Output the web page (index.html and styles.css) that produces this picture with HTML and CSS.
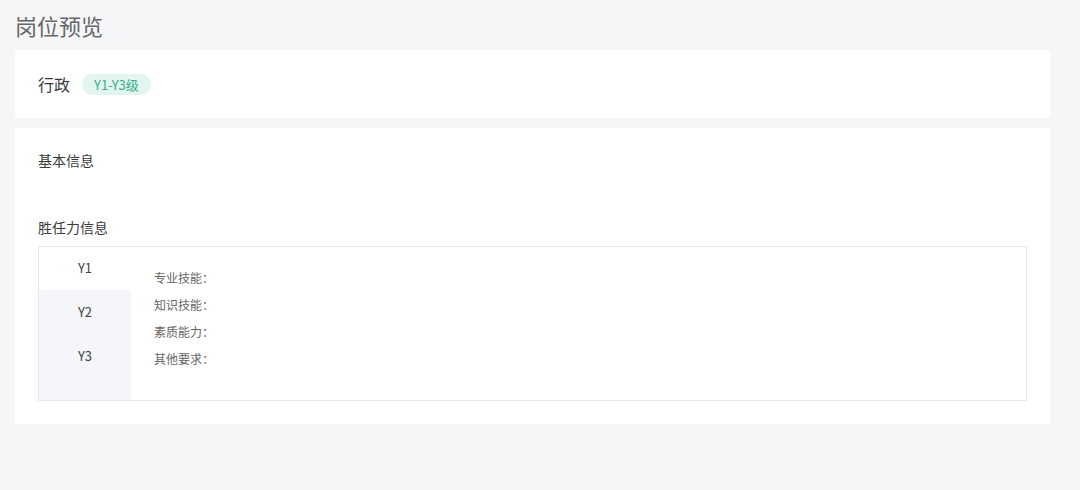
FILE: index.html
```html
<!DOCTYPE html>
<html lang="zh-CN">
<head>
  <meta charset="UTF-8">
  <meta name="viewport" content="width=device-width, initial-scale=1.0">
  <title>岗位预览</title>
  <link rel="stylesheet" href="styles.css">
</head>
<body>
  <div class="page">
    <h1 class="page-title">岗位预览</h1>

    <div class="card card-head">
      <span class="job-name">行政</span>
      <span class="tag">Y1-Y3级</span>
    </div>

    <div class="card card-body">
      <div class="section-title">基本信息</div>
      <div class="section-title section-gap">胜任力信息</div>

      <div class="level-box">
        <div class="level-tabs">
          <div class="level-tab active">Y1</div>
          <div class="level-tab">Y2</div>
          <div class="level-tab">Y3</div>
        </div>
        <div class="level-info">
          <div class="info-row">专业技能：</div>
          <div class="info-row">知识技能：</div>
          <div class="info-row">素质能力：</div>
          <div class="info-row">其他要求：</div>
        </div>
      </div>
    </div>
  </div>
</body>
</html>
```

FILE: styles.css
```css
html, body {
  margin: 0;
  padding: 0;
  background: #f5f6f8;
}
body {
  font-family: "Noto Sans CJK SC", "Noto Sans", sans-serif;
  color: #333;
}
.page {
  padding: 10px 30px 0 15px;
}
.page-title {
  margin: 0 0 10px;
  font-size: 22px;
  line-height: 30px;
  font-weight: normal;
  color: #666;
}
.card {
  background: #fff;
  border-radius: 2px;
}
.card-head {
  height: 68px;
  display: flex;
  align-items: center;
  padding: 0 23px;
  margin-bottom: 10px;
}
.job-name {
  font-size: 16px;
  line-height: 22px;
  color: #3a3a3a;
}
.tag {
  margin-left: 12px;
  height: 21px;
  line-height: 21px;
  padding: 0 12px;
  border-radius: 11px;
  background: #e2f5ef;
  color: #3aae8c;
  font-size: 13px;
}
.card-body {
  padding: 22px 23px 23px;
}
.section-title {
  font-size: 14px;
  line-height: 20px;
  color: #3a3a3a;
}
.section-gap {
  margin-top: 47px;
  margin-bottom: 9px;
}
.level-box {
  display: flex;
  border: 1px solid #e8e8e8;
  height: 153px;
}
.level-tabs {
  width: 92px;
  background: #f4f6f9;
}
.level-tab {
  height: 44px;
  line-height: 44px;
  text-align: center;
  font-size: 13px;
  color: #444;
}
.level-tab.active {
  background: #fff;
  height: 43px;
  line-height: 42px;
}
.level-info {
  padding: 17px 23px 0;
}
.info-row {
  font-size: 12px;
  line-height: 27px;
  color: #666;
}
```
